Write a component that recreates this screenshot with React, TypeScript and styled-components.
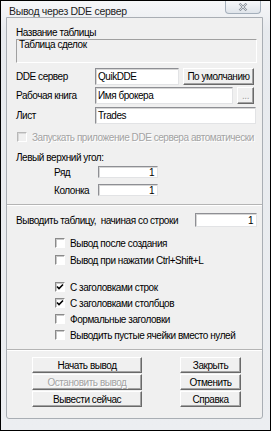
import styled, { createGlobalStyle } from "styled-components";

const GlobalStyle = createGlobalStyle`
  html, body {
    margin: 0;
    padding: 0;
    background: #ffffff;
  }
`;

const Window = styled.div`
  width: 271px;
  height: 431px;
  box-sizing: border-box;
  border: 1px solid #000;
  background: linear-gradient(#f6f7f9, #e7eaee 30px, #eceef1);
  display: flex;
  flex-direction: column;
  font-family: "Liberation Sans", Arial, sans-serif;
  font-size: 10px;
  letter-spacing: -0.45px;
  color: #000;
`;

const TitleBar = styled.div`
  height: 16px;
  display: flex;
  justify-content: space-between;
  align-items: flex-start;
  padding: 0 9px 0 8px;
`;

const Title = styled.span`
  font-size: 10.5px;
  letter-spacing: -0.3px;
  line-height: 14px;
  padding-top: 3px;
  color: #1e1e1e;
`;

const CloseButton = styled.div`
  width: 36px;
  height: 13px;
  box-sizing: border-box;
  border: 1px solid #a4afbb;
  border-top: none;
  border-radius: 0 0 4px 4px;
  background: linear-gradient(#f7f8fa, #dfe4ea);
  display: flex;
  align-items: center;
  justify-content: center;
`;

const Client = styled.div`
  flex: 1;
  margin: 0 7px 11px 5px;
  border: 1px solid #a9aeb4;
  border-radius: 0 0 3px 3px;
  background: #f0f0f0;
  display: flex;
  flex-direction: column;
`;

const Section = styled.div<{ $bottom: number }>`
  display: flex;
  flex-direction: column;
  padding: 0 6px ${(p) => p.$bottom}px 9px;
`;

const Separator = styled.div`
  border-top: 1px solid #b4b4b4;
  border-bottom: 1px solid #ffffff;
`;

const Caption = styled.div<{ $top: number; $indent?: number }>`
  margin-top: ${(p) => p.$top}px;
  margin-left: ${(p) => p.$indent ?? 0}px;
  line-height: 13px;
  white-space: nowrap;
`;

const NameBox = styled.div`
  height: 24px;
  box-sizing: border-box;
  margin-right: -1px;
  border: 1px solid;
  border-color: #a0a0a0 #ffffff #ffffff #a0a0a0;
  padding: 0 2px;
  line-height: 10px;
`;

const FormRow = styled.div<{ $top: number; $h?: number; $indent?: number }>`
  display: flex;
  align-items: center;
  margin-top: ${(p) => p.$top}px;
  margin-left: ${(p) => p.$indent ?? 0}px;
  height: ${(p) => p.$h ?? 17}px;
  white-space: nowrap;
`;

const Label = styled.span<{ $w?: number }>`
  ${(p) => (p.$w ? `width: ${p.$w}px;` : "")}
  flex-shrink: 0;
`;

const Field = styled.div<{ $w?: number; $h?: number; $right?: boolean; $push?: boolean }>`
  box-sizing: border-box;
  ${(p) => (p.$w ? `width: ${p.$w}px; flex-shrink: 0;` : "flex: 1;")}
  height: ${(p) => p.$h ?? 17}px;
  ${(p) => (p.$push ? "margin-left: auto;" : "")}
  background: #ffffff;
  border: 1px solid;
  border-color: #8e8f94 #e2e3e5 #e2e3e5 #8e8f94;
  box-shadow: inset 1px 1px 0 #d6d6d6;
  padding: 0 3px 0 2px;
  display: flex;
  align-items: center;
  justify-content: ${(p) => (p.$right ? "flex-end" : "flex-start")};
`;

const PushButton = styled.div<{ $w?: number; $h?: number; $disabled?: boolean }>`
  box-sizing: border-box;
  ${(p) => (p.$w ? `width: ${p.$w}px;` : "")}
  height: ${(p) => p.$h ?? 16}px;
  flex-shrink: 0;
  background: #f0f0f0;
  border: 1px solid;
  border-color: #ffffff #696969 #696969 #ffffff;
  box-shadow: inset -1px -1px 0 #a3a3a3;
  display: flex;
  align-items: center;
  justify-content: center;
  color: ${(p) => (p.$disabled ? "#a3a3a3" : "#000")};
  text-shadow: ${(p) => (p.$disabled ? "1px 1px 0 #ffffff" : "none")};
  white-space: nowrap;
`;

const CheckRow = styled.div<{ $top: number; $indent: number; $disabled?: boolean }>`
  display: flex;
  align-items: center;
  gap: 4px;
  height: 12px;
  margin-top: ${(p) => p.$top}px;
  margin-left: ${(p) => p.$indent}px;
  color: ${(p) => (p.$disabled ? "#a3a3a3" : "#000")};
  text-shadow: ${(p) => (p.$disabled ? "1px 1px 0 #ffffff" : "none")};
  white-space: nowrap;
`;

const CheckBox = styled.span<{ $disabled?: boolean }>`
  width: 10px;
  height: 10px;
  box-sizing: border-box;
  margin-right: 1px;
  border: 1px solid;
  border-color: ${(p) =>
    p.$disabled ? "#b8b8b8 #ffffff #ffffff #b8b8b8" : "#8a8a8a #ffffff #ffffff #8a8a8a"};
  background: ${(p) => (p.$disabled ? "#f0f0f0" : "#ffffff")};
  box-shadow: inset 1px 1px 0 ${(p) => (p.$disabled ? "#d8d8d8" : "#c8c8c8")};
  display: flex;
  align-items: center;
  justify-content: center;
  flex-shrink: 0;
`;

const ButtonGrid = styled.div`
  display: grid;
  grid-template-columns: 110px 61px;
  column-gap: 38px;
  row-gap: 1px;
  margin: 6px 0 0 16px;
`;

function Check({
  label,
  checked,
  disabled,
  top,
  indent,
}: {
  label: string;
  checked?: boolean;
  disabled?: boolean;
  top: number;
  indent: number;
}) {
  return (
    <CheckRow $top={top} $indent={indent} $disabled={disabled}>
      <CheckBox $disabled={disabled}>
        {checked && (
          <svg width="8" height="8" viewBox="0 0 8 8">
            <path d="M1 3.5 L3 5.5 L7 1.5" fill="none" stroke="#000" strokeWidth="1.6" />
          </svg>
        )}
      </CheckBox>
      {label}
    </CheckRow>
  );
}

const options = [
  { label: "Вывод после создания", top: 10 },
  { label: "Вывод при нажатии Ctrl+Shift+L", top: 5 },
  { label: "С заголовками строк", top: 15, checked: true },
  { label: "С заголовками столбцов", top: 4, checked: true },
  { label: "Формальные заголовки", top: 4 },
  { label: "Выводить пустые ячейки вместо нулей", top: 4 },
];

export default function App() {
  return (
    <>
      <GlobalStyle />
      <Window>
        <TitleBar>
          <Title>Вывод через DDE сервер</Title>
          <CloseButton>
            <svg width="10" height="8" viewBox="0 0 10 8">
              <path d="M1.5 0.5 L8.5 7.5 M8.5 0.5 L1.5 7.5" stroke="#8c939c" strokeWidth="2.2" />
              <path d="M1.5 0.5 L8.5 7.5 M8.5 0.5 L1.5 7.5" stroke="#eef1f4" strokeWidth="0.8" />
            </svg>
          </CloseButton>
        </TitleBar>

        <Client>
          <Section $bottom={8}>
            <Caption $top={8}>Название таблицы</Caption>
            <NameBox>Таблица сделок</NameBox>

            <FormRow $top={5}>
              <Label $w={79}>DDE сервер</Label>
              <Field $w={84}>QuikDDE</Field>
              <PushButton $w={71} $h={17} style={{ marginLeft: 4 }}>
                По умолчанию
              </PushButton>
            </FormRow>
            <FormRow $top={2}>
              <Label $w={79}>Рабочая книга</Label>
              <Field $w={138}>Имя брокера</Field>
              <PushButton $w={17} $h={17} style={{ marginLeft: 4 }} $disabled>
                ...
              </PushButton>
            </FormRow>
            <FormRow $top={3}>
              <Label $w={79}>Лист</Label>
              <Field>Trades</Field>
            </FormRow>

            <Check
              label="Запускать приложение DDE сервера автоматически"
              disabled
              top={7}
              indent={1}
            />

            <Caption $top={8}>Левый верхний угол:</Caption>
            <FormRow $top={2} $h={12} $indent={38}>
              <Label $w={44}>Ряд</Label>
              <Field $w={60} $h={12} $right>
                1
              </Field>
            </FormRow>
            <FormRow $top={6} $h={12} $indent={38}>
              <Label $w={44}>Колонка</Label>
              <Field $w={60} $h={12} $right>
                1
              </Field>
            </FormRow>
          </Section>

          <Separator />

          <Section $bottom={8}>
            <FormRow $top={7} $h={14}>
              <Label>Выводить таблицу,&nbsp; начиная со строки</Label>
              <Field $w={62} $h={14} $right $push style={{ marginRight: -1 }}>
                1
              </Field>
            </FormRow>
            {options.map((o) => (
              <Check key={o.label} label={o.label} checked={o.checked} top={o.top} indent={39} />
            ))}
          </Section>

          <Separator />

          <Section $bottom={10}>
            <ButtonGrid>
              <PushButton>Начать вывод</PushButton>
              <PushButton>Закрыть</PushButton>
              <PushButton $disabled>Остановить вывод</PushButton>
              <PushButton>Отменить</PushButton>
              <PushButton>Вывести сейчас</PushButton>
              <PushButton>Справка</PushButton>
            </ButtonGrid>
          </Section>
        </Client>
      </Window>
    </>
  );
}
